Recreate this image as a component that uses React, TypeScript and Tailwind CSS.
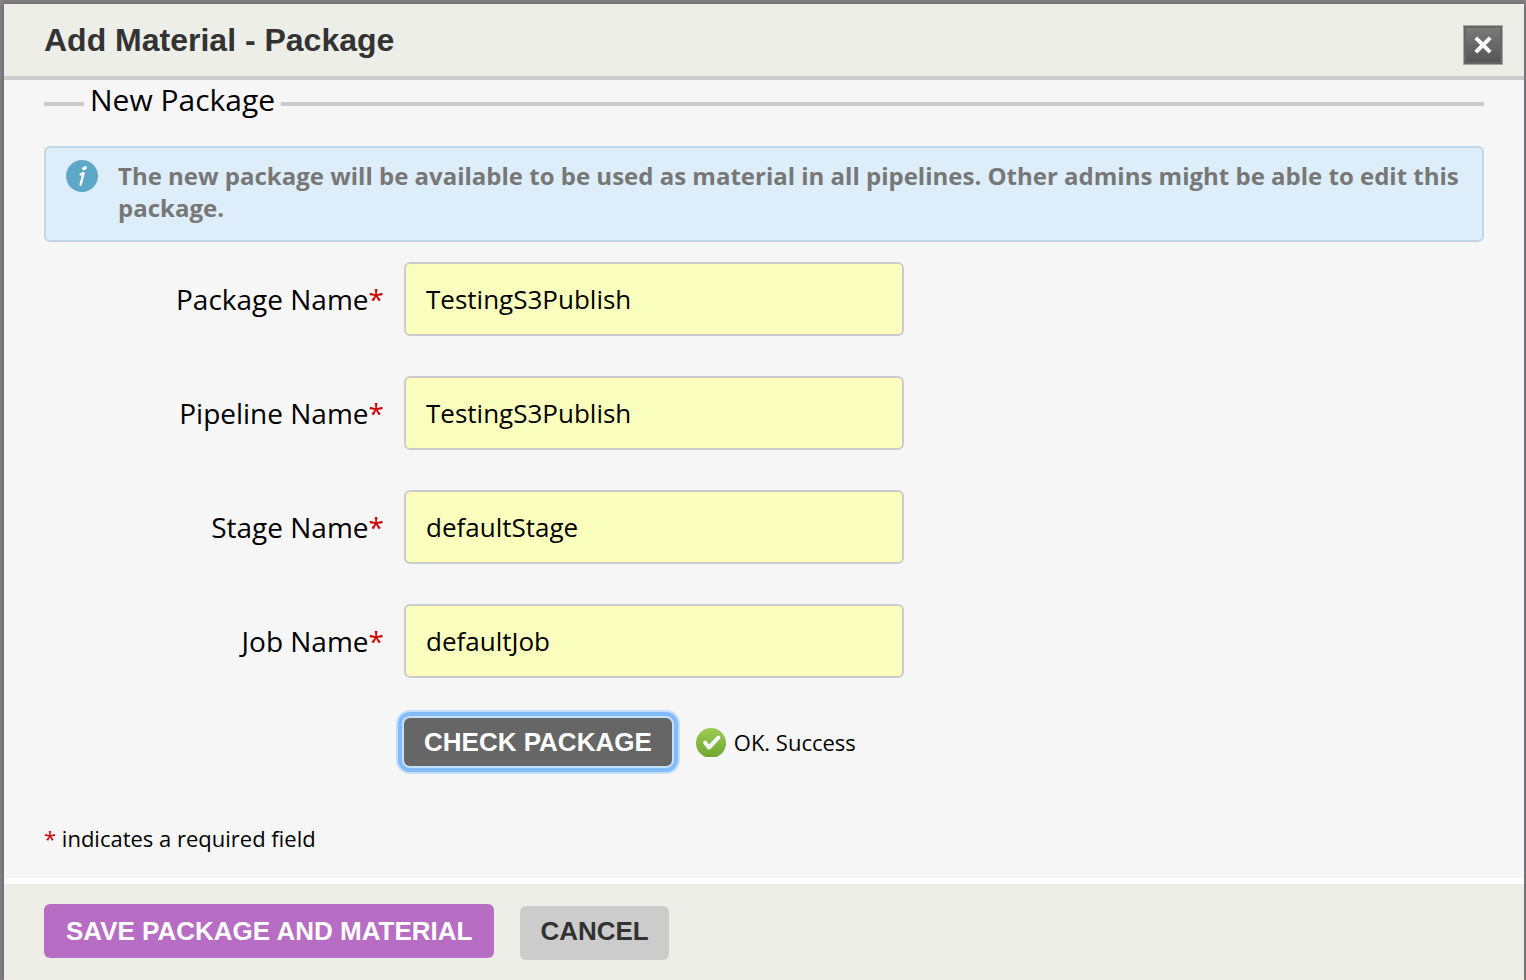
import React from "react";

const fields = [
  { id: "package-name", label: "Package Name", value: "TestingS3Publish" },
  { id: "pipeline-name", label: "Pipeline Name", value: "TestingS3Publish" },
  { id: "stage-name", label: "Stage Name", value: "defaultStage" },
  { id: "job-name", label: "Job Name", value: "defaultJob" },
];

function CloseIcon() {
  return (
    <svg viewBox="0 0 20 20" className="size-5" aria-hidden="true">
      <path d="M2.8 2.8 17.2 17.2M17.2 2.8 2.8 17.2" stroke="#fff" strokeWidth="4" fill="none" />
    </svg>
  );
}

function InfoIcon() {
  return (
    <svg viewBox="0 0 32 32" className="size-8 shrink-0" aria-hidden="true">
      <circle cx="16" cy="16" r="16" fill="#5ea8c7" />
      <path d="M17.8 8.6 19.4 7.6" stroke="#fff" strokeWidth="3.2" strokeLinecap="round" />
      <path d="M14.6 14.4 17.6 13.2 14.6 24.6" stroke="#fff" strokeWidth="2.4" fill="none" strokeLinecap="round" strokeLinejoin="round" />
    </svg>
  );
}

function SuccessIcon() {
  return (
    <svg viewBox="0 0 30 29" className="h-[29px] w-[30px]" aria-hidden="true">
      <defs>
        <linearGradient id="success-fill" x1="0" y1="0" x2="0" y2="1">
          <stop offset="0" stopColor="#9ccc55" />
          <stop offset="1" stopColor="#6ea52f" />
        </linearGradient>
      </defs>
      <circle cx="15" cy="15" r="15" fill="url(#success-fill)" />
      <path d="M9 14.5 13 19.5 22.5 9.5" stroke="#f6f6f6" strokeWidth="4" fill="none" strokeLinecap="round" strokeLinejoin="round" />
    </svg>
  );
}

export default function App() {
  return (
    <div className="flex min-h-screen bg-[#858387] pt-1 pr-0.5 pl-1 font-['Open_Sans','Noto_Sans',sans-serif] text-black">
      <section
        role="dialog"
        aria-labelledby="dialog-title"
        className="flex flex-1 flex-col bg-[#f6f6f6] shadow-[0_0_6px_#5c5a5f]"
      >
        <header className="flex items-start justify-between border-b-4 border-[#cccccc] bg-[#edeee7] pr-[22px] pl-10">
          <h1
            id="dialog-title"
            className="py-4 font-['Liberation_Sans',Arial,sans-serif] text-[32px] leading-10 font-bold text-[#333333]"
          >
            Add Material - Package
          </h1>
          <button
            type="button"
            aria-label="Close"
            className="mt-[22px] flex size-[38px] items-center justify-center border-2 border-[#666666] bg-linear-to-b from-[#7a7a7a] to-[#555555] outline outline-[#a5a5a5]"
          >
            <CloseIcon />
          </button>
        </header>

        <form className="flex flex-1 flex-col" onSubmit={(e) => e.preventDefault()}>
          <div className="flex-1 px-10">
            <fieldset className="border-t-4 border-[#cccccc]">
              <legend className="ml-10 px-1.5 pb-2 text-[30px] leading-10">New Package</legend>

              <div className="mt-[18px] flex gap-5 rounded-md border-2 border-[#c4d7e4] bg-[#ddeefa] pt-3 pr-5 pb-4 pl-5">
                <InfoIcon />
                <p className="text-2xl leading-8 font-bold text-[#777777]">
                  The new package will be available to be used as material in all pipelines. Other admins might be able
                  to edit this package.
                </p>
              </div>

              <div className="mt-5 flex flex-col gap-10">
                {fields.map((field) => (
                  <div key={field.id} className="flex items-center gap-5">
                    <label htmlFor={field.id} className="w-[340px] text-right text-[28px] leading-10">
                      {field.label}
                      <span className="text-[#cc0000]">*</span>
                    </label>
                    <input
                      id={field.id}
                      type="text"
                      defaultValue={field.value}
                      className="h-[74px] w-[500px] rounded-md border-2 border-[#cccccc] bg-[#faffbd] px-5 text-[26px]"
                    />
                  </div>
                ))}
              </div>

              <div className="mt-10 ml-[360px] flex items-center">
                <button
                  type="button"
                  className="h-12 rounded-md bg-[#666666] px-5 font-['Liberation_Sans',Arial,sans-serif] text-[26px] leading-8 font-bold text-white shadow-[0_0_0_2px_#c5dff9,0_0_0_6px_#83bcfa,0_0_0_8px_#c5dffa]"
                >
                  CHECK PACKAGE
                </button>
                <div role="status" className="ml-6 flex items-center gap-2 text-[22px] leading-8">
                  <SuccessIcon />
                  OK. Success
                </div>
              </div>
            </fieldset>

            <p className="mt-14 pb-6 text-[22px] leading-8">
              <span className="text-[#cc0000]">*</span> indicates a required field
            </p>
          </div>

          <footer className="flex items-start gap-[26px] border-t-6 border-white bg-[#edeee7] px-10 pt-5 pb-5 font-['Liberation_Sans',Arial,sans-serif] text-[26px] leading-8 font-bold">
            <button type="submit" className="h-[54px] rounded-md bg-[#b76dc3] px-[22px] text-white">
              SAVE PACKAGE AND MATERIAL
            </button>
            <button type="button" className="mt-0.5 h-[54px] rounded-md bg-[#cccccc] px-5 pb-1 text-[#333333]">
              CANCEL
            </button>
          </footer>
        </form>
      </section>
    </div>
  );
}
